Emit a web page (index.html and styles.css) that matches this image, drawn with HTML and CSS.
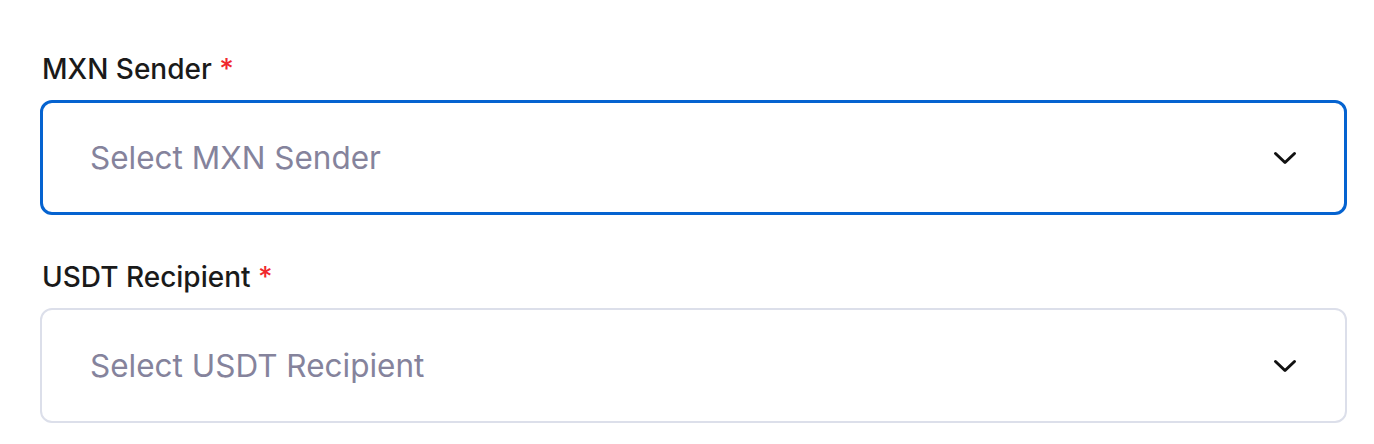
FILE: index.html
```html
<!DOCTYPE html>
<html>
<head>
<meta charset="utf-8">
<link rel="stylesheet" href="styles.css">
</head>
<body>
<div class="form">
  <div class="field">
    <label class="label">MXN Sender <span class="req">*</span></label>
    <div class="select focused">
      <span class="placeholder">Select MXN Sender</span>
      <svg class="chev" width="26" height="26" viewBox="0 0 26 26"><path d="M3.5 8.5l9.5 9 9.5-9" fill="none" stroke="#111" stroke-width="3" stroke-linecap="round" stroke-linejoin="round"/></svg>
    </div>
  </div>
  <div class="field">
    <label class="label">USDT Recipient <span class="req">*</span></label>
    <div class="select">
      <span class="placeholder">Select USDT Recipient</span>
      <svg class="chev" width="26" height="26" viewBox="0 0 26 26"><path d="M3.5 8.5l9.5 9 9.5-9" fill="none" stroke="#111" stroke-width="3" stroke-linecap="round" stroke-linejoin="round"/></svg>
    </div>
  </div>
</div>
</body>
</html>
```
FILE: styles.css
```css
html, body { margin: 0; padding: 0; background: #fff; }
body { font-family: Inter, "Noto Sans", sans-serif; }
.form { padding: 50px 27px 0 40px; display: flex; flex-direction: column; gap: 43px; }
.field { display: flex; flex-direction: column; gap: 12px; }
.label { font-size: 28px; font-weight: 450; color: #1a1a1a; line-height: 38px; padding-left: 2px; }
.req { color: #f0282d; }
.select { height: 115px; box-sizing: border-box; border: 2px solid #dcdfea; border-radius: 12px; display: flex; align-items: center; justify-content: space-between; padding: 0 47px 0 48px; }
.select.focused { border: 3px solid #0563d0; padding: 0 46px 0 47px; }
.placeholder { font-size: 31.5px; color: #85839c; }
.chev { display: block; }
```
